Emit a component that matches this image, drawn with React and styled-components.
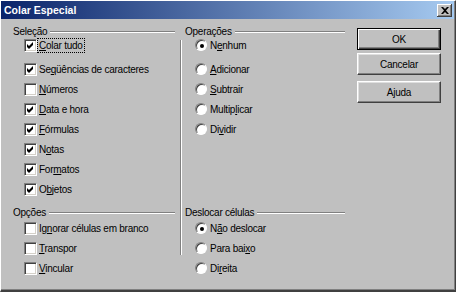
import React from 'react'
import styled, { createGlobalStyle } from 'styled-components'

const Global = createGlobalStyle`
  html, body {
    margin: 0;
    padding: 0;
    background: #c0c0c0;
    overflow: hidden;
  }
  * { box-sizing: border-box; }
`

const Window = styled.div`
  width: 456px;
  height: 292px;
  background: #c0c0c0;
  border-top: 1px solid #ffffff;
  border-left: 1px solid #ffffff;
  border-right: 1px solid #404040;
  border-bottom: 2px solid #404040;
  box-shadow: inset -1px -1px 0 #808080;
  font-family: "Liberation Sans", Arial, sans-serif;
  font-size: 10px;
  letter-spacing: -0.25px;
  color: #000;
  display: flex;
  flex-direction: column;
`

const TitleBar = styled.div`
  height: 18px;
  margin-right: 1px;
  background: linear-gradient(to right, #0a246a, #a6caf0);
  display: flex;
  align-items: center;
  justify-content: space-between;
  padding: 0 2px 0 3px;
`

const Title = styled.span`
  color: #fff;
  font-weight: bold;
  font-size: 10.5px;
  letter-spacing: 0;
`

const CloseButton = styled.div`
  width: 15px;
  height: 13px;
  background: #c0c0c0;
  box-shadow: inset -1px -1px 0 #404040, inset 1px 1px 0 #ffffff,
    inset -2px -2px 0 #808080;
  display: flex;
  align-items: center;
  justify-content: center;
`

const Body = styled.div`
  display: flex;
  flex: 1;
`

const Content = styled.div`
  display: grid;
  grid-template-columns: 162px 10px 160px;
  grid-template-rows: auto auto;
  row-gap: 9px;
  align-items: start;
  align-content: start;
  padding: 6px 0 0 12px;
`

const Separator = styled.div`
  grid-column: 2;
  grid-row: 1 / 3;
  width: 2px;
  height: 215px;
  margin: 15px 0 0 5px;
  border-left: 1px solid #808080;
  border-right: 1px solid #ffffff;
`

const Group = styled.div`
  grid-column: ${({ $col }) => $col};
  grid-row: ${({ $row }) => $row};
  display: flex;
  flex-direction: column;
`

const Header = styled.div`
  height: 12px;
  display: flex;
  align-items: center;
  margin-bottom: ${({ $gap }) => $gap || 0}px;
`

const HeaderLine = styled.div`
  flex: 1;
  height: 2px;
  margin-left: 3px;
  margin-top: 1px;
  border-top: 1px solid #808080;
  border-bottom: 1px solid #ffffff;
`

const Items = styled.div`
  display: flex;
  flex-direction: column;
  gap: 4px;
  padding-left: ${({ $indent }) => $indent}px;
  & > *:first-child {
    margin-bottom: ${({ $first }) => $first || 0}px;
  }
`

const Row = styled.div`
  height: 16px;
  display: flex;
  align-items: center;
`

const Box = styled.div`
  width: 13px;
  height: 13px;
  background: #fff;
  border-top: 1px solid #808080;
  border-left: 1px solid #808080;
  border-right: 1px solid #ffffff;
  border-bottom: 1px solid #ffffff;
  box-shadow: inset 1px 1px 0 #404040, inset -1px -1px 0 #d4d0c8;
  display: flex;
  align-items: center;
  justify-content: center;
  flex-shrink: 0;
`

const Circle = styled.div`
  width: 12px;
  height: 12px;
  border-radius: 50%;
  background: #fff;
  border: 1px solid;
  border-color: #808080 #ffffff #ffffff #808080;
  box-shadow: inset 1px 1px 0 #404040;
  display: flex;
  align-items: center;
  justify-content: center;
  flex-shrink: 0;
`

const Dot = styled.div`
  width: 4px;
  height: 4px;
  border-radius: 50%;
  background: #000;
  margin: 1px 0 0 1px;
`

const Label = styled.span`
  margin-left: ${({ $gap }) => $gap}px;
  padding: 0 1px;
  line-height: 13px;
  border: 1px dotted ${({ $focus }) => ($focus ? '#000' : 'transparent')};
  white-space: nowrap;
`

const Buttons = styled.div`
  display: flex;
  flex-direction: column;
  padding: 9px 0 0 12px;
`

const Button = styled.div`
  width: 84px;
  height: 22px;
  margin-bottom: ${({ $mb }) => $mb}px;
  background: #c0c0c0;
  display: flex;
  align-items: center;
  justify-content: center;
  border: 1px solid;
  border-color: ${({ $default }) =>
    $default ? '#000' : '#ffffff #404040 #404040 #ffffff'};
  box-shadow: ${({ $default }) =>
    $default
      ? 'inset 1px 1px 0 #ffffff, inset -1px -1px 0 #404040, inset -2px -2px 0 #808080'
      : 'inset -1px -1px 0 #808080, inset 1px 1px 0 #dfdfdf'};
`

const Check = () => (
  <svg width="7" height="7" viewBox="0 0 7 7">
    <path d="M0 2 L2 4 L6 0 L6 3 L2 7 L0 5 Z" fill="#000" />
  </svg>
)

const CheckRow = ({ checked, focus, children }) => (
  <Row>
    <Box>{checked && <Check />}</Box>
    <Label $gap={0} $focus={focus}>{children}</Label>
  </Row>
)

const RadioRow = ({ checked, children }) => (
  <Row>
    <Circle>{checked && <Dot />}</Circle>
    <Label $gap={1}>{children}</Label>
  </Row>
)

export default function App() {
  return (
    <>
      <Global />
      <Window>
        <TitleBar>
          <Title>Colar Especial</Title>
          <CloseButton>
            <svg width="8" height="7" viewBox="0 0 8 7">
              <path d="M0 0 L2 0 L4 2 L6 0 L8 0 L5 3.5 L8 7 L6 7 L4 5 L2 7 L0 7 L3 3.5 Z" fill="#000" />
            </svg>
          </CloseButton>
        </TitleBar>
        <Body>
          <Content>
            <Group $col={1} $row={1}>
              <Header>
                Seleção
                <HeaderLine />
              </Header>
              <Items $indent={11} $first={4}>
                <CheckRow checked focus><u>C</u>olar tudo</CheckRow>
                <CheckRow checked>Se<u>q</u>üências de caracteres</CheckRow>
                <CheckRow><u>N</u>úmeros</CheckRow>
                <CheckRow checked><u>D</u>ata e hora</CheckRow>
                <CheckRow checked><u>F</u>órmulas</CheckRow>
                <CheckRow checked>N<u>o</u>tas</CheckRow>
                <CheckRow checked>For<u>m</u>atos</CheckRow>
                <CheckRow checked>O<u>b</u>jetos</CheckRow>
              </Items>
            </Group>
            <Separator />
            <Group $col={3} $row={1}>
              <Header>
                Operações
                <HeaderLine />
              </Header>
              <Items $indent={10} $first={4}>
                <RadioRow checked>N<u>e</u>nhum</RadioRow>
                <RadioRow><u>A</u>dicionar</RadioRow>
                <RadioRow><u>S</u>ubtrair</RadioRow>
                <RadioRow>Multip<u>l</u>icar</RadioRow>
                <RadioRow>Di<u>v</u>idir</RadioRow>
              </Items>
            </Group>
            <Group $col={1} $row={2}>
              <Header $gap={2}>
                Opções
                <HeaderLine />
              </Header>
              <Items $indent={11}>
                <CheckRow>Ig<u>n</u>orar células em branco</CheckRow>
                <CheckRow><u>T</u>ranspor</CheckRow>
                <CheckRow><u>V</u>incular</CheckRow>
              </Items>
            </Group>
            <Group $col={3} $row={2}>
              <Header $gap={2}>
                Deslocar células
                <HeaderLine />
              </Header>
              <Items $indent={10}>
                <RadioRow checked>N<u>ã</u>o deslocar</RadioRow>
                <RadioRow>Para bai<u>x</u>o</RadioRow>
                <RadioRow>Di<u>r</u>eita</RadioRow>
              </Items>
            </Group>
          </Content>
          <Buttons>
            <Button $default $mb={3}>OK</Button>
            <Button $mb={6}>Cancelar</Button>
            <Button $mb={0}>A<u>j</u>uda</Button>
          </Buttons>
        </Body>
      </Window>
    </>
  )
}
